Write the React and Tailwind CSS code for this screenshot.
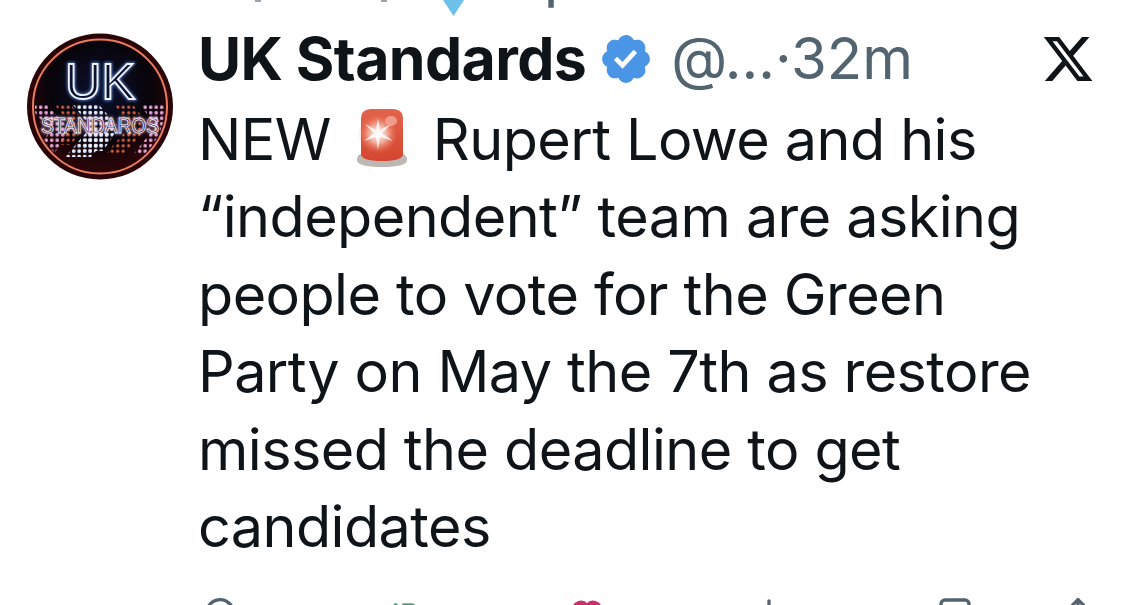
import React from 'react';
import { MessageCircle, Repeat2, Heart, BarChart2, Bookmark, Share } from 'lucide-react';

// Neon channel logo
const Avatar = () => (
  <svg viewBox="0 0 146 147" className="w-[146px] h-[147px] shrink-0">
    <defs>
      <pattern id="dotsPink" width="5.5" height="5.5" patternUnits="userSpaceOnUse">
        <circle cx="2.7" cy="2.7" r="1.8" fill="#eaa6e0" />
      </pattern>
      <pattern id="dotsWhite" width="5.5" height="5.5" patternUnits="userSpaceOnUse">
        <circle cx="2.7" cy="2.7" r="1.9" fill="#e8eeff" />
      </pattern>
      <pattern id="dotsRed" width="5.5" height="5.5" patternUnits="userSpaceOnUse">
        <circle cx="2.7" cy="2.7" r="1.6" fill="#dc6440" />
      </pattern>
      <radialGradient id="avatarBg" cx="50%" cy="38%" r="58%">
        <stop offset="0%" stopColor="#0b1130" />
        <stop offset="65%" stopColor="#08040a" />
        <stop offset="100%" stopColor="#2a0508" />
      </radialGradient>
      <filter id="glow" x="-20%" y="-20%" width="140%" height="140%">
        <feGaussianBlur stdDeviation="1.6" />
      </filter>
      <clipPath id="ringClip">
        <circle cx="73" cy="73.5" r="65" />
      </clipPath>
    </defs>
    <circle cx="73" cy="73.5" r="73" fill="#2a0507" />
    <circle cx="73" cy="73.5" r="67" fill="url(#avatarBg)" stroke="#ee7a60" strokeWidth="2" />
    <g clipPath="url(#ringClip)">
      <path d="M0 72 L20 72 L44 97 L26 122 L6 122 L24 97 Z" fill="url(#dotsPink)" />
      <path d="M46 72 L72 72 L90 92 L64 124 L38 124 L64 94 Z" fill="url(#dotsWhite)" />
      <path d="M28 72 L44 72 L60 90 L44 112 L30 112 L44 92 Z" fill="url(#dotsRed)" />
      <path d="M88 72 L106 72 L122 92 L96 122 L78 122 L102 94 Z" fill="url(#dotsRed)" />
      <path d="M114 72 L140 72 L146 92 L122 122 L106 122 L128 94 Z" fill="url(#dotsPink)" />
      <path d="M60 100 L88 100 L76 118 L56 118 Z" fill="url(#dotsWhite)" />
    </g>
    <text x="73" y="66" textAnchor="middle" className="font-['Liberation_Sans',sans-serif]" fontSize="50" fill="none" stroke="#5f8fe0" strokeWidth="3" filter="url(#glow)" textLength="70" lengthAdjust="spacingAndGlyphs">UK</text>
    <text x="73" y="66" textAnchor="middle" className="font-['Liberation_Sans',sans-serif]" fontSize="50" fill="#0b1230" stroke="#eef3fe" strokeWidth="1.8" textLength="70" lengthAdjust="spacingAndGlyphs">UK</text>
    <text x="73" y="100" textAnchor="middle" className="font-['Liberation_Sans',sans-serif]" fontSize="22" fill="#f0c8f0" stroke="#f0c8f0" strokeWidth="2.5" opacity="0.55" filter="url(#glow)" textLength="118" lengthAdjust="spacingAndGlyphs">STANDAROS</text>
    <text x="73" y="100" textAnchor="middle" className="font-['Liberation_Sans',sans-serif]" fontSize="22" fill="#1a0a22" stroke="#fbeefc" strokeWidth="0.9" textLength="118" lengthAdjust="spacingAndGlyphs">STANDAROS</text>
  </svg>
);

const VerifiedBadge = () => (
  <svg viewBox="0 0 22 22" className="w-[56px] h-[56px] shrink-0">
    <path fill="#4a95e6" d="M20.396 11c-.018-.646-.215-1.275-.57-1.816-.354-.54-.852-.972-1.438-1.246.223-.607.27-1.264.14-1.897-.131-.634-.437-1.218-.882-1.687-.47-.445-1.053-.75-1.687-.882-.633-.13-1.29-.083-1.897.14-.273-.587-.704-1.086-1.245-1.44S11.647 1.62 11 1.604c-.646.017-1.273.213-1.813.568s-.969.854-1.24 1.44c-.608-.223-1.267-.272-1.902-.14-.635.13-1.22.436-1.69.882-.445.47-.749 1.055-.878 1.688-.13.633-.08 1.29.144 1.896-.587.274-1.087.705-1.443 1.245-.356.54-.555 1.17-.574 1.817.02.647.218 1.276.574 1.817.356.54.856.972 1.443 1.245-.224.606-.274 1.263-.144 1.896.13.634.433 1.218.877 1.688.47.443 1.054.747 1.687.878.633.132 1.29.084 1.897-.136.274.586.705 1.084 1.246 1.439.54.354 1.17.551 1.816.569.647-.016 1.276-.213 1.817-.567s.972-.854 1.245-1.44c.604.239 1.266.296 1.903.164.636-.132 1.22-.447 1.68-.907.46-.46.776-1.044.908-1.681s.075-1.299-.165-1.903c.586-.274 1.084-.705 1.439-1.246.354-.54.551-1.17.569-1.816z" />
    <path fill="#fff" d="M9.662 14.85l-3.429-3.428 1.293-1.302 2.072 2.072 4.4-4.794 1.347 1.246z" />
  </svg>
);

const XLogo = () => (
  <svg viewBox="0 0 24 24" className="w-[54px] h-[54px] shrink-0 text-[#0f1419]" fill="currentColor">
    <path d="M18.244 2.25h3.308l-7.227 8.26 8.502 11.24H16.17l-5.214-6.817L4.99 21.75H1.68l7.73-8.835L1.254 2.25H8.08l4.713 6.231zm-1.161 17.52h1.833L7.084 4.126H5.117z" />
  </svg>
);

const Siren = () => (
  <svg viewBox="0 0 52 60" className="w-[52px] h-[60px] shrink-0 -mt-[4px]">
    <defs>
      <linearGradient id="sirenBody" x1="0" y1="0" x2="0" y2="1">
        <stop offset="0%" stopColor="#e2644c" />
        <stop offset="100%" stopColor="#d4452e" />
      </linearGradient>
      <radialGradient id="sirenFlash" cx="50%" cy="50%" r="50%">
        <stop offset="0%" stopColor="#fff" />
        <stop offset="45%" stopColor="#f9c6b8" stopOpacity="0.8" />
        <stop offset="100%" stopColor="#ef6a50" stopOpacity="0" />
      </radialGradient>
      <filter id="sirenSoft" x="-20%" y="-20%" width="140%" height="140%">
        <feGaussianBlur stdDeviation="0.7" />
      </filter>
    </defs>
    <path d="M1 52 Q1 47 5 46 H47 Q51 47 51 52 Q51 59 26 59 Q1 59 1 52 Z" fill="#bdb8b4" />
    <path d="M5 10 Q5 2 14 1 H38 Q47 2 47 10 V46 Q47 53 26 53 Q5 53 5 46 Z" fill="url(#sirenBody)" />
    <circle cx="22" cy="26" r="20" fill="url(#sirenFlash)" />
    <path d="M22 10 L24 22 L35 16 L26 25 L37 33 L24 29 L22 42 L20 29 L8 33 L18 25 L9 16 L20 22 Z" fill="#fff" opacity="0.8" filter="url(#sirenSoft)" />
    <ellipse cx="35" cy="13" rx="6" ry="5" fill="#f7b0a0" opacity="0.75" filter="url(#sirenSoft)" />
  </svg>
);

// Tops of the action icons, each with its distance to the next one
const bottomIcons = [
  { Icon: MessageCircle, size: 32, color: 'text-[#536471]', space: 'mr-[153px]' },
  { Icon: Repeat2, size: 32, color: 'text-[#4f9e7c]', space: 'mr-[150px]' },
  { Icon: Heart, size: 32, color: 'text-[#c9306f] fill-[#c9306f]', space: 'mr-[150px]' },
  { Icon: BarChart2, size: 32, color: 'text-[#536471]', space: 'mr-[146px]' },
  { Icon: Bookmark, size: 48, color: 'text-[#536471] -mt-[3px]', space: 'mr-[83px]' },
  { Icon: Share, size: 32, color: 'text-[#536471]', space: '' },
];

const tweetLines = [
  '“independent” team are asking',
  'people to vote for the Green',
  'Party on May the 7th as restore',
  'missed the deadline to get',
  'candidates',
];

export default function App() {
  return (
    <div className="w-[1125px] h-[605px] overflow-hidden bg-white text-[#0f1419] font-['Inter','Liberation_Sans',sans-serif] flex flex-col">
      {/* Repost line, cut off by the top of the picture */}
      <div className="h-[33px] shrink-0 overflow-hidden flex items-start pl-[132px]">
        <Repeat2 size={44} strokeWidth={2.2} className="text-[#536471] -mt-[37px] shrink-0" />
        <span className="ml-[79px] mt-0 w-[6px] h-[2px] bg-[#9aa5ad] shrink-0" />
        <span className="ml-[120px] mt-0 w-[6px] h-[2px] bg-[#9aa5ad] shrink-0" />
        <svg viewBox="0 0 21 16" className="w-[21px] h-[16px] ml-[56px] shrink-0">
          <path d="M0 0 H21 L10.5 16 Z" fill="#6cc0ea" />
        </svg>
        <span className="ml-[33px] -mt-[50px] text-[50px] leading-[60px] font-medium text-[#536471]">reposted</span>
      </div>

      <div className="flex pl-[27px] pr-[30px]">
        <Avatar />
        <div className="flex-1 pl-[25px] min-w-0">
          {/* Header */}
          <div className="flex items-center h-[51px]">
            <span className="text-[59px] leading-[51px] font-bold tracking-[-0.01em] whitespace-nowrap">UK Standards</span>
            <div className="ml-[12px] -my-[3px]"><VerifiedBadge /></div>
            <span className="ml-[17px] text-[58px] leading-[51px] text-[#536471] whitespace-nowrap">@...·32m</span>
            <div className="ml-auto -my-[2px]"><XLogo /></div>
          </div>
          {/* Body */}
          <div className="mt-[17px] text-[57.5px] leading-[77.4px] tracking-[-0.01em] whitespace-nowrap">
            <div className="flex items-center gap-[25px] h-[77.4px]">
              <span>NEW</span>
              <Siren />
              <span>Rupert Lowe and his</span>
            </div>
            {tweetLines.map((line) => (
              <div key={line}>{line}</div>
            ))}
          </div>
        </div>
      </div>

      {/* Action bar, cut off by the bottom */}
      <div className="mt-[32px] pl-[204px] flex items-start">
        {bottomIcons.map(({ Icon, size, color, space }, i) => (
          <Icon key={i} size={size} strokeWidth={size === 48 ? 1.7 : 2.5} className={`${color} ${space} shrink-0`} />
        ))}
      </div>
    </div>
  );
}
